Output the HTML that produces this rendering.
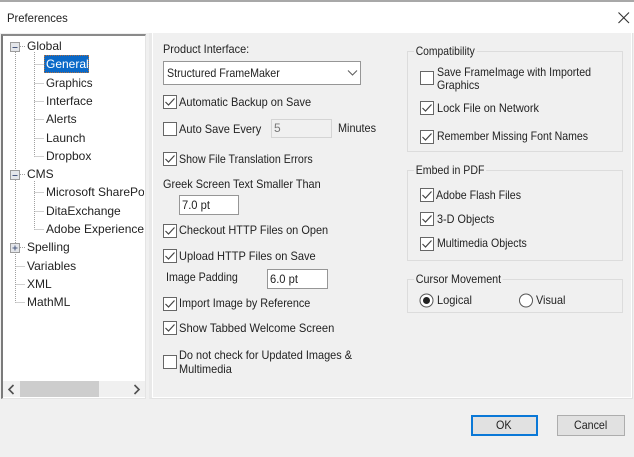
<!DOCTYPE html>
<html><head><meta charset="utf-8"><style>
html,body{margin:0;padding:0;width:634px;height:457px;overflow:hidden;background:#f0f0f0}
#r{position:relative;width:634px;height:457px;overflow:hidden;font:12px/16px "Liberation Sans",sans-serif;color:#222;filter:blur(.35px)}
#r div,#r svg{position:absolute}
.t{white-space:nowrap;height:16px;transform-origin:0 50%}
.c{border:1px solid #666;background:#fff;box-sizing:border-box;width:14px;height:14px}
.g{border:1px solid #dcdcdc;box-sizing:border-box}
.i{background:#fff;border:1px solid #969696;box-sizing:border-box}
.l{background:#f0f0f0;padding:0 2px}
</style></head><body><div id="r">
<div style="left:0;top:0;width:634px;height:33px;background:#fff"></div>
<div style="left:0;top:0;width:634px;height:2px;background:#a8a8a8"></div>
<div class="t" style="left:7px;top:10px;transform:scaleX(.94)">Preferences</div>
<svg style="left:617px;top:11px" width="14" height="14" viewBox="0 0 14 14"><path d="M1.5 1.5L12 12M12 1.5L1.5 12" stroke="#333" stroke-width="1.1" fill="none"/></svg>

<!-- tree -->
<div style="left:1px;top:34px;width:145px;height:365px;background:#fff;box-sizing:border-box;border:1px solid #e4e4e4;border-left:2px solid #7a7a7a;border-top:2px solid #8a8a8a"></div>
<svg style="left:0;top:0" width="150" height="320">
<g stroke="#a0a0a0" stroke-dasharray="1 1" fill="none">
<path d="M15.5 52V302.5M20 46.5H25M20 174.5H25M20 247.5H25M15.5 266.5H25M15.5 284.5H25M15.5 302.5H25"/>
<path d="M34.5 52V156.5M34.5 64.5H44M34.5 83.5H44M34.5 101.5H44M34.5 119.5H44M34.5 138.5H44M34.5 156.5H44"/>
<path d="M34.5 181V229.5M34.5 192.5H44M34.5 211.5H44M34.5 229.5H44"/>
</g>
<g stroke="#9c9c9c">
<rect x="10.5" y="42.5" width="9" height="9" fill="#e4e6ea"/><rect x="10.5" y="170.5" width="9" height="9" fill="#e4e6ea"/><rect x="10.5" y="243.5" width="9" height="9" fill="#e4e6ea"/>
</g>
<path d="M12.5 47.5H17.5M12.5 175.5H17.5M12.5 248H17.5M15 245.5V250.5" stroke="#4a5a80" fill="none"/>
</svg>
<div style="left:44px;top:55px;width:45px;height:18px;background:#0a69c8;box-sizing:border-box;border:1px dotted #b07040"></div>
<div class="t" style="left:27px;top:38px">Global</div>
<div class="t" style="left:46px;top:56px;color:#fff">General</div>
<div class="t" style="left:46px;top:75px;transform:scaleX(.97)">Graphics</div>
<div class="t" style="left:46px;top:93px">Interface</div>
<div class="t" style="left:46px;top:111px">Alerts</div>
<div class="t" style="left:46px;top:130px">Launch</div>
<div class="t" style="left:46px;top:148px">Dropbox</div>
<div class="t" style="left:27px;top:166px">CMS</div>
<div class="t" style="left:46px;top:184px;width:98px;overflow:hidden">Microsoft SharePoint</div>
<div class="t" style="left:46px;top:203px">DitaExchange</div>
<div class="t" style="left:46px;top:221px;width:98px;overflow:hidden">Adobe Experience Manager</div>
<div class="t" style="left:27px;top:239px">Spelling</div>
<div class="t" style="left:27px;top:258px">Variables</div>
<div class="t" style="left:27px;top:276px">XML</div>
<div class="t" style="left:27px;top:294px">MathML</div>
<div style="left:3px;top:381px;width:142px;height:16px;background:#f0f0f0"></div>
<div style="left:20px;top:381px;width:79px;height:16px;background:#cdcdcd"></div>
<svg style="left:3px;top:381px" width="142" height="16"><path d="M10.5 4L6 8.5L10.5 13M131.5 4L136 8.5L131.5 13" stroke="#505050" stroke-width="1.6" fill="none"/></svg>

<!-- panel -->
<div style="left:149px;top:33px;width:484px;height:366px;box-sizing:border-box;background:#f0f0f0;border-left:3px solid #e9e9e9;border-bottom:1px solid #e2e2e2;border-right:1px solid #e2e2e2;box-shadow:inset -1px -1px 0 #fff, inset 1px 0 0 #fff"></div>

<div class="t" style="left:163px;top:41px;transform:scaleX(.91)">Product Interface:</div>
<div class="i" style="left:163px;top:61px;width:198px;height:24px"></div>
<div class="t" style="left:167px;top:65px;transform:scaleX(.89)">Structured FrameMaker</div>
<svg style="left:347px;top:69px" width="12" height="8"><path d="M1 1.5L5.5 6L10 1.5" stroke="#606060" stroke-width="1.1" fill="none"/></svg>

<div class="c" style="left:163px;top:95px"></div><svg style="left:163px;top:95px" width="14" height="14"><path d="M2.5 7L5.5 10L11.5 3.5" stroke="#444" stroke-width="1.2" fill="none"/></svg>
<div class="t" style="left:179px;top:94px;transform:scaleX(.917)">Automatic Backup on Save</div>
<div class="c" style="left:163px;top:122px"></div>
<div class="t" style="left:179px;top:121px;transform:scaleX(.92)">Auto Save Every</div>
<div style="left:271px;top:119px;width:61px;height:19px;box-sizing:border-box;border:1px solid #d4d4d4;background:#f0f0f0"></div>
<div class="t" style="left:274px;top:120px;color:#777">5</div>
<div class="t" style="left:338px;top:120px;transform:scaleX(.905)">Minutes</div>
<div class="c" style="left:163px;top:152px"></div><svg style="left:163px;top:152px" width="14" height="14"><path d="M2.5 7L5.5 10L11.5 3.5" stroke="#444" stroke-width="1.2" fill="none"/></svg>
<div class="t" style="left:179px;top:151px;transform:scaleX(.887)">Show File Translation Errors</div>
<div class="t" style="left:163px;top:176px;transform:scaleX(.908)">Greek Screen Text Smaller Than</div>
<div class="i" style="left:179px;top:195px;width:60px;height:20px"></div>
<div class="t" style="left:182px;top:197px;transform:scaleX(.93)">7.0 pt</div>
<div class="c" style="left:163px;top:224px"></div><svg style="left:163px;top:224px" width="14" height="14"><path d="M2.5 7L5.5 10L11.5 3.5" stroke="#444" stroke-width="1.2" fill="none"/></svg>
<div class="t" style="left:179px;top:222px;transform:scaleX(.914)">Checkout HTTP Files on Open</div>
<div class="c" style="left:163px;top:249px"></div><svg style="left:163px;top:249px" width="14" height="14"><path d="M2.5 7L5.5 10L11.5 3.5" stroke="#444" stroke-width="1.2" fill="none"/></svg>
<div class="t" style="left:179px;top:248px;transform:scaleX(.92)">Upload HTTP Files on Save</div>
<div class="t" style="left:166px;top:269px;transform:scaleX(.89)">Image Padding</div>
<div class="i" style="left:267px;top:269px;width:61px;height:20px"></div>
<div class="t" style="left:270px;top:271px;transform:scaleX(.93)">6.0 pt</div>
<div class="c" style="left:163px;top:297px"></div><svg style="left:163px;top:297px" width="14" height="14"><path d="M2.5 7L5.5 10L11.5 3.5" stroke="#444" stroke-width="1.2" fill="none"/></svg>
<div class="t" style="left:179px;top:295px;transform:scaleX(.903)">Import Image by Reference</div>
<div class="c" style="left:163px;top:321px"></div><svg style="left:163px;top:321px" width="14" height="14"><path d="M2.5 7L5.5 10L11.5 3.5" stroke="#444" stroke-width="1.2" fill="none"/></svg>
<div class="t" style="left:179px;top:320px;transform:scaleX(.93)">Show Tabbed Welcome Screen</div>
<div class="c" style="left:163px;top:355px"></div>
<div class="t" style="left:179px;top:347px;transform:scaleX(.91)">Do not check for Updated Images &amp;</div>
<div class="t" style="left:179px;top:361px;transform:scaleX(.91)">Multimedia</div>

<!-- right groups -->
<div class="g" style="left:407px;top:51px;width:216px;height:101px"></div>
<div class="t l" style="left:414px;top:43px;transform:scaleX(.86)">Compatibility</div>
<div class="c" style="left:420px;top:71px"></div>
<div class="t" style="left:437px;top:64px;transform:scaleX(.885)">Save FrameImage with Imported</div>
<div class="t" style="left:437px;top:77px;transform:scaleX(.885)">Graphics</div>
<div class="c" style="left:420px;top:101px"></div><svg style="left:420px;top:101px" width="14" height="14"><path d="M2.5 7L5.5 10L11.5 3.5" stroke="#444" stroke-width="1.2" fill="none"/></svg>
<div class="t" style="left:437px;top:100px;transform:scaleX(.91)">Lock File on Network</div>
<div class="c" style="left:420px;top:130px"></div><svg style="left:420px;top:130px" width="14" height="14"><path d="M2.5 7L5.5 10L11.5 3.5" stroke="#444" stroke-width="1.2" fill="none"/></svg>
<div class="t" style="left:437px;top:128px;transform:scaleX(.878)">Remember Missing Font Names</div>

<div class="g" style="left:407px;top:170px;width:216px;height:91px"></div>
<div class="t l" style="left:414px;top:162px;transform:scaleX(.88)">Embed in PDF</div>
<div class="c" style="left:420px;top:188px"></div><svg style="left:420px;top:188px" width="14" height="14"><path d="M2.5 7L5.5 10L11.5 3.5" stroke="#444" stroke-width="1.2" fill="none"/></svg>
<div class="t" style="left:436px;top:187px;transform:scaleX(.885)">Adobe Flash Files</div>
<div class="c" style="left:420px;top:212px"></div><svg style="left:420px;top:212px" width="14" height="14"><path d="M2.5 7L5.5 10L11.5 3.5" stroke="#444" stroke-width="1.2" fill="none"/></svg>
<div class="t" style="left:437px;top:211px;transform:scaleX(.905)">3-D Objects</div>
<div class="c" style="left:420px;top:237px"></div><svg style="left:420px;top:237px" width="14" height="14"><path d="M2.5 7L5.5 10L11.5 3.5" stroke="#444" stroke-width="1.2" fill="none"/></svg>
<div class="t" style="left:437px;top:235px;transform:scaleX(.88)">Multimedia Objects</div>

<div class="g" style="left:407px;top:279px;width:216px;height:34px"></div>
<div class="t l" style="left:414px;top:271px;transform:scaleX(.895)">Cursor Movement</div>
<svg style="left:419px;top:293px" width="120" height="15">
<circle cx="7.5" cy="7.5" r="6.5" fill="#fff" stroke="#555"/><circle cx="7.5" cy="7.5" r="3.5" fill="#222"/>
<circle cx="107" cy="7.5" r="6.5" fill="#fff" stroke="#555"/></svg>
<div class="t" style="left:437px;top:292px;transform:scaleX(.92)">Logical</div>
<div class="t" style="left:536px;top:292px;transform:scaleX(.906)">Visual</div>

<!-- buttons -->
<div style="left:471px;top:415px;width:67px;height:21px;box-sizing:border-box;background:#e1e1e1;border:2px solid #0a78d7"></div>
<div class="t" style="left:496px;top:417px;transform:scaleX(.9)">OK</div>
<div style="left:557px;top:415px;width:68px;height:21px;box-sizing:border-box;background:#e1e1e1;border:1px solid #adadad"></div>
<div class="t" style="left:574px;top:417px;transform:scaleX(.89)">Cancel</div>
</div></body></html>
